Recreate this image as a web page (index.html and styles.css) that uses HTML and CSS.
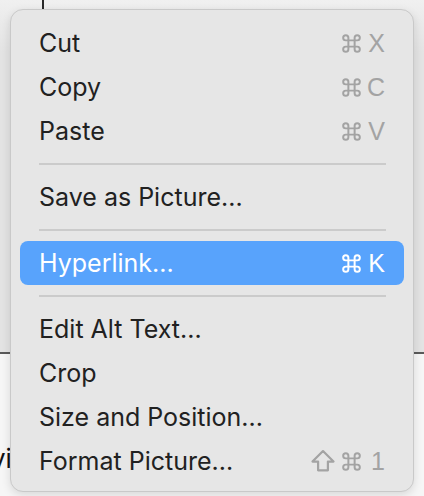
FILE: index.html
```html
<!DOCTYPE html>
<html>
<head>
<meta charset="utf-8">
<link rel="stylesheet" href="styles.css">
</head>
<body>
<div class="backdrop">
  <div class="upper"><div class="vline"></div></div>
  <div class="hline"></div>
  <div class="lower"><span class="frag">vi</span></div>
</div>
<div class="menu">
  <div class="item"><span>Cut</span><span class="key"><svg class="cmd" viewBox="0 0 24 24"><path d="M9 9h6v6H9z M9 9V6.5A2.5 2.5 0 1 0 6.5 9H9 M15 9V6.5A2.5 2.5 0 1 1 17.5 9H15 M9 15v2.5A2.5 2.5 0 1 1 6.5 15H9 M15 15v2.5A2.5 2.5 0 1 0 17.5 15H15"/></svg><span class="k">X</span></span></div>
  <div class="item"><span>Copy</span><span class="key"><svg class="cmd" viewBox="0 0 24 24"><path d="M9 9h6v6H9z M9 9V6.5A2.5 2.5 0 1 0 6.5 9H9 M15 9V6.5A2.5 2.5 0 1 1 17.5 9H15 M9 15v2.5A2.5 2.5 0 1 1 6.5 15H9 M15 15v2.5A2.5 2.5 0 1 0 17.5 15H15"/></svg><span class="k">C</span></span></div>
  <div class="item"><span>Paste</span><span class="key"><svg class="cmd" viewBox="0 0 24 24"><path d="M9 9h6v6H9z M9 9V6.5A2.5 2.5 0 1 0 6.5 9H9 M15 9V6.5A2.5 2.5 0 1 1 17.5 9H15 M9 15v2.5A2.5 2.5 0 1 1 6.5 15H9 M15 15v2.5A2.5 2.5 0 1 0 17.5 15H15"/></svg><span class="k">V</span></span></div>
  <div class="sep"></div>
  <div class="item"><span>Save as Picture...</span></div>
  <div class="sep"></div>
  <div class="item active"><span>Hyperlink...</span><span class="key"><svg class="cmd" viewBox="0 0 24 24"><path d="M9 9h6v6H9z M9 9V6.5A2.5 2.5 0 1 0 6.5 9H9 M15 9V6.5A2.5 2.5 0 1 1 17.5 9H15 M9 15v2.5A2.5 2.5 0 1 1 6.5 15H9 M15 15v2.5A2.5 2.5 0 1 0 17.5 15H15"/></svg><span class="k">K</span></span></div>
  <div class="sep"></div>
  <div class="item"><span>Edit Alt Text...</span></div>
  <div class="item"><span>Crop</span></div>
  <div class="item"><span>Size and Position...</span></div>
  <div class="item"><span>Format Picture...</span><span class="key"><svg class="shift" viewBox="0 0 24 24"><path d="M12 3.5L21 12.5h-4.8V20H7.8v-7.5H3z"/></svg><svg class="cmd" viewBox="0 0 24 24"><path d="M9 9h6v6H9z M9 9V6.5A2.5 2.5 0 1 0 6.5 9H9 M15 9V6.5A2.5 2.5 0 1 1 17.5 9H15 M9 15v2.5A2.5 2.5 0 1 1 6.5 15H9 M15 15v2.5A2.5 2.5 0 1 0 17.5 15H15"/></svg><span class="k one">1</span></span></div>
</div>
</body>
</html>
```
FILE: styles.css
```css
html, body {
  margin: 0;
  padding: 0;
}
body {
  width: 424px;
  height: 496px;
  overflow: hidden;
  position: relative;
  background: #f4f4f4;
  font-family: Inter, "Noto Sans", "DejaVu Sans", sans-serif;
}
.backdrop {
  display: flex;
  flex-direction: column;
  height: 496px;
}
.upper {
  height: 352px;
  background: linear-gradient(#f0f0f0, #e3e3e3 15%, #e3e3e3);
}
.vline {
  margin-left: 42px;
  width: 2px;
  height: 12px;
  background: #2a2a2a;
}
.hline {
  height: 2px;
  background: #5a5a5a;
}
.lower {
  flex: 1;
  background: #f6f6f6;
  padding-top: 91px;
}
.frag {
  display: block;
  margin-left: -9px;
  font-size: 26px;
  color: #111;
  line-height: 28px;
}
.menu {
  position: absolute;
  left: 10px;
  top: 9px;
  width: 404px;
  height: 483px;
  box-sizing: border-box;
  background: #e6e6e6;
  border: 1px solid #c9c9c9;
  border-radius: 13px;
  box-shadow: 0 3px 10px rgba(0,0,0,0.12);
  padding: 11px 9px 0;
}
.item {
  height: 44px;
  display: flex;
  align-items: center;
  justify-content: space-between;
  padding: 0 19px;
  font-size: 25px;
  color: #212121;
  border-radius: 8px;
}
.item.active {
  background: #58a3fc;
  color: #fff;
}
.key {
  display: flex;
  align-items: center;
  color: #a3a3a3;
  font-family: "Liberation Sans", Arial, sans-serif;
  font-size: 25px;
}
.active .key {
  color: #fff;
}
.cmd, .shift {
  width: 25px;
  height: 25px;
  fill: none;
  stroke: currentColor;
  stroke-width: 1.9;
}
.shift {
  width: 28px;
  height: 28px;
  margin-right: 2px;
  stroke-width: 1.9;
  stroke-linejoin: round;
}
.k {
  margin-left: 3px;
  display: inline-block;
  min-width: 18px;
  text-align: right;
}
.k.one {
  min-width: 0;
  margin-left: 7px;
}
.sep {
  height: 2px;
  background: #cbcbcb;
  margin: 10px 18px 10px 19px;
}
```
